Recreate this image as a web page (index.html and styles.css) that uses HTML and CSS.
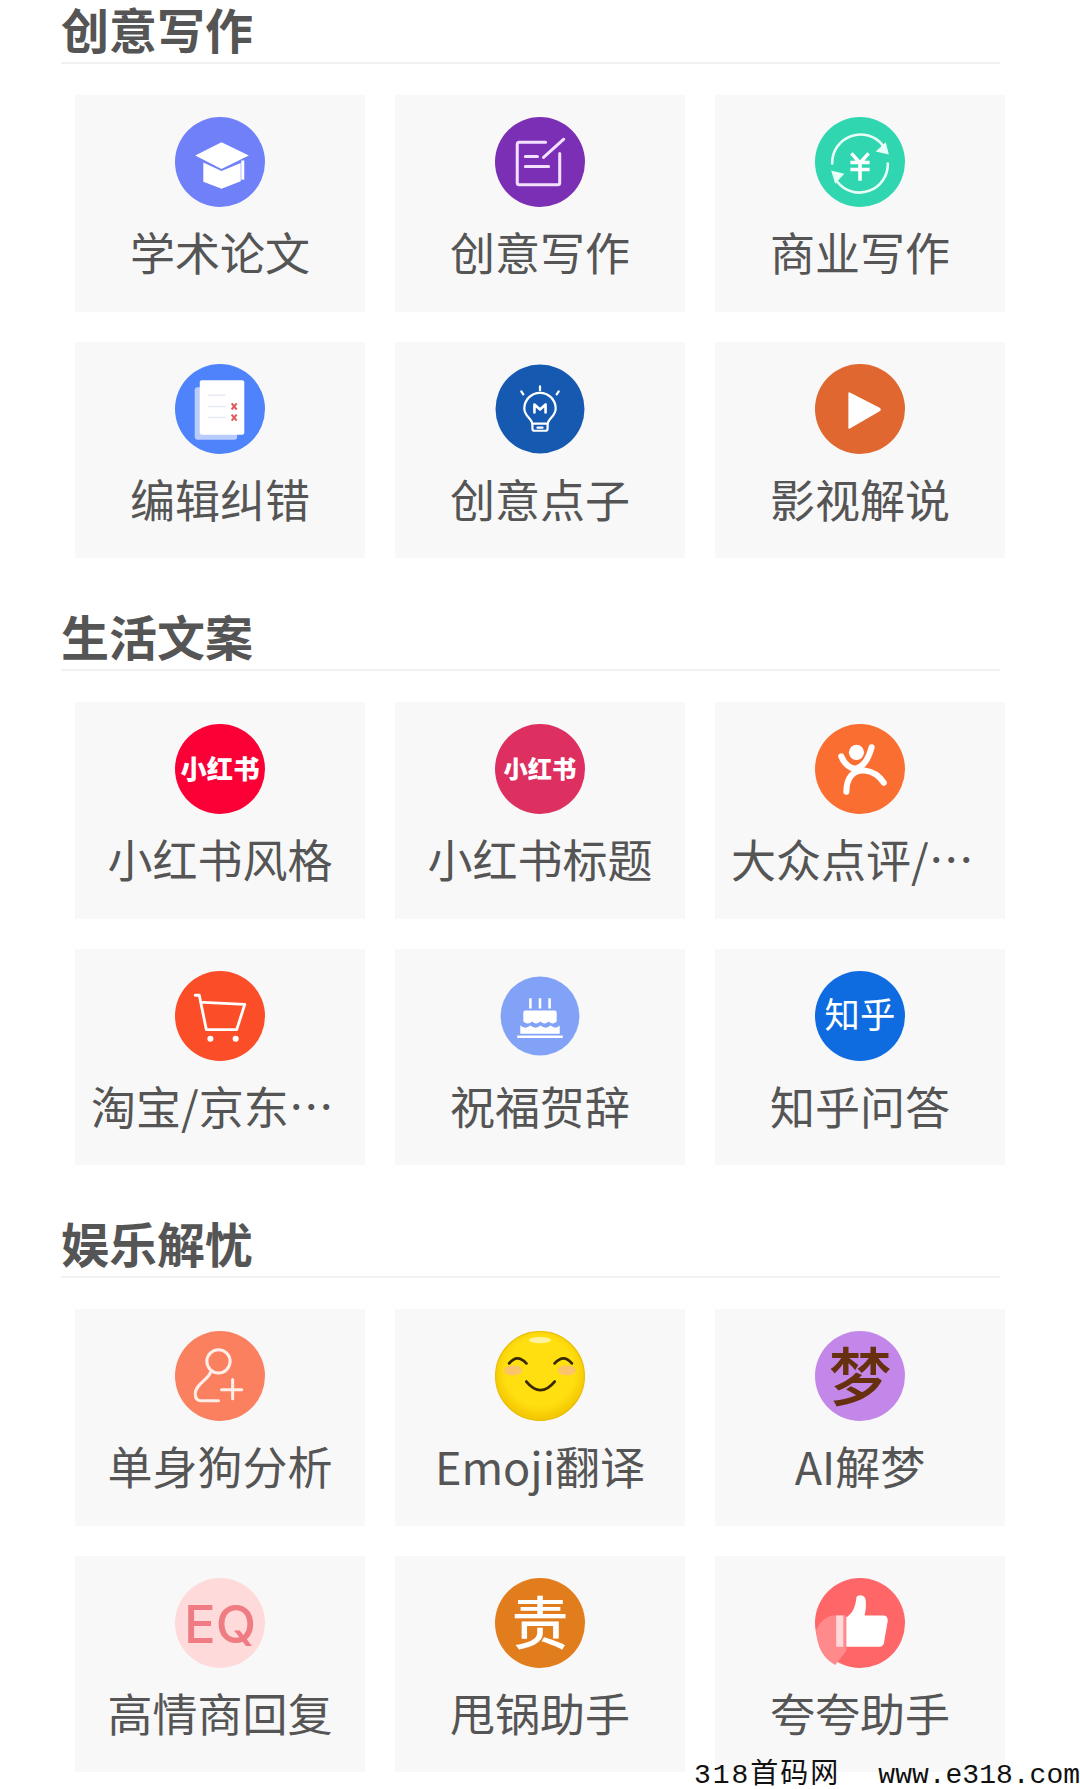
FILE: index.html
```html
<!DOCTYPE html>
<html lang="zh-CN">
<head>
<meta charset="utf-8">
<title>AI 写作工具</title>
<link rel="stylesheet" href="styles.css">
</head>
<body>
<main class="page">
  <section class="group">
    <h2 class="group-title">创意写作</h2>
    <div class="tools">
      <a class="tool">
        <svg class="icon" viewBox="0 0 89 89"><circle cx="44.5" cy="44.5" r="44.5" fill="#6f80f9"/><path d="M28 45l18 8.500 19-8v18l-19 7.500-18-7z" fill="#fff"/><path d="M20 38l26-13 27 13-27 13.500z" fill="#fff"/><path d="M67 43v19" stroke="#fff" stroke-width="3"/></svg>
        <span class="tool-name">学术论文</span>
      </a>
      <a class="tool">
        <svg class="icon" viewBox="0 0 89 89"><circle cx="44.5" cy="44.5" r="44.5" fill="#7b2fb5"/><g fill="none" stroke="#f3e0ff" stroke-width="3" stroke-linecap="round" stroke-linejoin="round"><path d="M50 25H24a2 2 0 0 0-2 2v38a2 2 0 0 0 2 2h38a2 2 0 0 0 2-2V36"/><path d="M30 39h12M30 49h23M48 40l20-18"/></g></svg>
        <span class="tool-name">创意写作</span>
      </a>
      <a class="tool">
        <svg class="icon" viewBox="0 0 89 89"><circle cx="44.5" cy="44.5" r="44.5" fill="#2fd6b0"/><g fill="none" stroke="#e8fff8" stroke-width="2.600" stroke-linecap="round"><path d="M17 46a28 28 0 0 1 50-18"/><path d="M72 46a28 28 0 0 1-50 18"/></g><path d="M73 37l-13-3 10-9zM16 53l13 3-9 10z" fill="#e8fff8"/><path d="M36 36l8.500 9.500 8.500-9.500M35 45h19M35 52h19M44.500 45v18" fill="none" stroke="#fff" stroke-width="3.500"/></svg>
        <span class="tool-name">商业写作</span>
      </a>
      <a class="tool">
        <svg class="icon" viewBox="0 0 89 89"><circle cx="44.5" cy="44.5" r="44.5" fill="#4f83fb"/><rect x="19.500" y="23" width="42" height="52" rx="3" fill="#b9cdfd"/><rect x="24.500" y="16" width="44" height="54" rx="2" fill="#fff"/><path d="M33 31h17M33 42h17M33 53h17" stroke="#e6e9f2" stroke-width="1.500"/><path d="M56 39l5 6m0-6l-5 6M56 50l5 6m0-6l-5 6" stroke="#dc5a60" stroke-width="2"/></svg>
        <span class="tool-name">编辑纠错</span>
      </a>
      <a class="tool">
        <svg class="icon" viewBox="0 0 89 89"><circle cx="44.5" cy="44.5" r="44" fill="#1559b0"/><g fill="none" stroke="#fff" stroke-width="2.200" stroke-linecap="round" stroke-linejoin="round"><path d="M37 60c0-6-8-8-8-16a15.500 15.500 0 0 1 31 0c0 8-8 10-8 16v4a2 2 0 0 1-2 2H39a2 2 0 0 1-2-2z"/><path d="M37 59h15M42 63h5"/><path d="M44.500 22v4M26 27l2 3M63 27l-2 3"/><path d="M39 48v-8l5.500 5 5.500-5v8" stroke-width="2.600"/></g></svg>
        <span class="tool-name">创意点子</span>
      </a>
      <a class="tool">
        <svg class="icon" viewBox="0 0 89 89"><circle cx="44.5" cy="44.5" r="44.5" fill="#e0672f"/><path d="M34 29l29 15a1 1 0 0 1 0 2L34 63z" fill="#fff" stroke="#fff" stroke-width="2" stroke-linejoin="round"/></svg>
        <span class="tool-name">影视解说</span>
      </a>
    </div>
  </section>

  <section class="group">
    <h2 class="group-title">生活文案</h2>
    <div class="tools">
      <a class="tool">
        <svg class="icon" viewBox="0 0 89 89"><circle cx="44.5" cy="44.5" r="44.5" fill="#fb0036"/><text class="glyph glyph-xhs" x="44.500" y="54" text-anchor="middle">小红书</text></svg>
        <span class="tool-name">小红书风格</span>
      </a>
      <a class="tool">
        <svg class="icon" viewBox="0 0 89 89"><circle cx="44.5" cy="44.5" r="44.5" fill="#dd3060"/><text class="glyph glyph-xhs-small" x="44.500" y="53" text-anchor="middle">小红书</text></svg>
        <span class="tool-name">小红书标题</span>
      </a>
      <a class="tool">
        <svg class="icon" viewBox="0 0 89 89"><circle cx="44.5" cy="44.5" r="44.5" fill="#fb6e32"/><circle cx="41" cy="28" r="7.500" fill="#fff"/><g fill="none" stroke="#fff" stroke-width="6" stroke-linecap="round"><path d="M26 32c3 8 10 13 15 12 7-2 12-10 15-21"/><path d="M31 67c0-14 7-22 18-21 9 1 15 6 19 12"/></g></svg>
        <span class="tool-name">大众点评/美团文案</span>
      </a>
      <a class="tool">
        <svg class="icon" viewBox="0 0 89 89"><circle cx="44.5" cy="44.5" r="44.5" fill="#fb4d27"/><g fill="none" stroke="#fff" stroke-width="2.800" stroke-linejoin="round" stroke-linecap="round"><path d="M20 24h4l7 34h30l8-25-41-2"/></g><circle cx="35" cy="67" r="3" fill="#fff"/><circle cx="60" cy="67" r="3" fill="#fff"/></svg>
        <span class="tool-name">淘宝/京东文案</span>
      </a>
      <a class="tool">
        <svg class="icon" viewBox="0 0 89 89"><circle cx="44.5" cy="44.5" r="39" fill="#82a2f8"/><path d="M28 50v-9q0-2 2-2h29q2 0 2 2v9q-4 4-8 0-4 4-8 0-5 4-8 0-5 4-9 0z" fill="#fff"/><path d="M25 54q5 4 10 0 5 4 10 0 5 4 10 0 5 4 9 0v8H25z" fill="#fff"/><path d="M22 65h45" stroke="#fff" stroke-width="2.500"/><path d="M35 27v10M44.500 27v10M54 27v10" stroke="#fff" stroke-width="2.500"/></svg>
        <span class="tool-name">祝福贺辞</span>
      </a>
      <a class="tool">
        <svg class="icon" viewBox="0 0 89 89"><circle cx="44.5" cy="44.5" r="44.5" fill="#0f6ce0"/><text class="glyph glyph-zhihu" x="44.500" y="56" text-anchor="middle">知乎</text></svg>
        <span class="tool-name">知乎问答</span>
      </a>
    </div>
  </section>

  <section class="group">
    <h2 class="group-title">娱乐解忧</h2>
    <div class="tools">
      <a class="tool">
        <svg class="icon" viewBox="0 0 89 89"><circle cx="44.5" cy="44.5" r="44.5" fill="#fb8060"/><g fill="none" stroke="#ffeee8" stroke-width="3" stroke-linecap="round"><ellipse cx="43" cy="30" rx="11.500" ry="11.500"/><path d="M35 41c-2 7-15 12-15 21 0 5 2 7 6 7h17"/><path d="M46 58h20M57 48v19"/></g></svg>
        <span class="tool-name">单身狗分析</span>
      </a>
      <a class="tool">
        <svg class="icon" viewBox="0 0 89 89"><defs><radialGradient id="smile" cx="50%" cy="45%" r="55%"><stop offset="70%" stop-color="#ffdf10"/><stop offset="100%" stop-color="#f2c400"/></radialGradient></defs><circle cx="44.5" cy="44.5" r="44" fill="url(#smile)" stroke="#e6bc00"/><ellipse cx="44.500" cy="9" rx="11" ry="3" fill="#fff3a0"/><ellipse cx="18" cy="39" rx="9" ry="5" fill="#fbc468"/><ellipse cx="71" cy="39" rx="9" ry="5" fill="#fbc468"/><g fill="none" stroke="#3a2a00" stroke-width="2.800" stroke-linecap="round"><path d="M14 32q8-10 17 0M59 32q9-10 17 0"/><path d="M31 50q14 17 28 0"/></g></svg>
        <span class="tool-name">Emoji翻译</span>
      </a>
      <a class="tool">
        <svg class="icon" viewBox="0 0 89 89"><circle cx="44.5" cy="44.5" r="44.5" fill="#c387ea"/><text class="glyph glyph-dream" x="44.500" y="68" text-anchor="middle">梦</text></svg>
        <span class="tool-name">AI解梦</span>
      </a>
      <a class="tool">
        <svg class="icon" viewBox="0 0 89 89"><circle cx="44.5" cy="44.5" r="44.5" fill="#fedada"/><text class="glyph glyph-eq" x="44.500" y="64" text-anchor="middle">EQ</text></svg>
        <span class="tool-name">高情商回复</span>
      </a>
      <a class="tool">
        <svg class="icon" viewBox="0 0 89 89"><circle cx="44.5" cy="44.5" r="44.5" fill="#e27d1e"/><text class="glyph glyph-blame" x="44.500" y="65" text-anchor="middle">责</text></svg>
        <span class="tool-name">甩锅助手</span>
      </a>
      <a class="tool">
        <svg class="icon" viewBox="0 0 89 89"><circle cx="44.5" cy="44.5" r="44.5" fill="#fe6668"/><path d="M1 52c2-6 8-13 16-15h14v35L20 86C8 80 2 68 1 52z" fill="#ff8a8c"/><path d="M21 37h7v31h-7z" fill="#ffd9d9"/><path d="M31 68V39c6-4 9-10 10-20 1-3 8-3 9 2 1 6 0 12-1 16h19c3 0 4 3 4 5l-4 23c-1 2-2 3-4 3z" fill="#fff"/></svg>
        <span class="tool-name">夸夸助手</span>
      </a>
    </div>
  </section>
</main>
<div class="watermark"><span class="watermark-name">318首码网</span><span>www.e318.com</span></div>
</body>
</html>
```

FILE: styles.css
```css
html, body {
  margin: 0;
  padding: 0;
  background: #fff;
}

body {
  position: relative;
  width: 1080px;
  height: 1789px;
  overflow: hidden;
  font-family: "Noto Sans CJK SC", "Noto Sans", sans-serif;
  color: #555;
}

.page {
  padding-left: 61px;
  width: 939px;
}

.group {
  margin-bottom: 49px;
}

.group-title {
  box-sizing: border-box;
  margin: 0;
  height: 64px;
  border-bottom: 2px solid #f1f1f1;
  font-size: 48px;
  font-weight: 700;
  line-height: 57px;
  color: #555;
}

.tools {
  display: grid;
  grid-template-columns: repeat(3, 290px);
  grid-auto-rows: 216.5px;
  gap: 30px;
  margin: 31px 0 0 14px;
}

.tool {
  display: flex;
  flex-direction: column;
  align-items: center;
  box-sizing: border-box;
  padding: 22px 16px 0;
  background: #f8f8f8;
  min-width: 0;
}

.icon {
  display: block;
  flex: none;
  width: 90px;
  height: 90px;
}

.tool-name {
  display: block;
  margin-top: 12px;
  max-width: 100%;
  overflow: hidden;
  font-size: 45px;
  line-height: 65px;
  white-space: nowrap;
  text-overflow: ellipsis;
  color: #555;
}

.glyph {
  fill: #fff;
  font-family: "Noto Sans CJK SC", sans-serif;
}

.glyph-xhs {
  font-size: 26px;
  font-weight: 900;
}

.glyph-xhs-small {
  font-size: 24px;
  font-weight: 900;
}

.glyph-zhihu {
  font-size: 35px;
}

.glyph-dream {
  fill: #66300f;
  font-size: 62px;
  font-weight: 500;
}

.glyph-eq {
  fill: #ee7c82;
  font-family: Inter, "Liberation Sans", sans-serif;
  font-size: 52px;
  font-weight: 500;
}

.glyph-blame {
  font-size: 56px;
  font-weight: 500;
}

.watermark {
  position: absolute;
  right: 0;
  bottom: -5px;
  display: flex;
  gap: 38px;
  font-family: "Liberation Mono", "Noto Sans CJK SC", monospace;
  font-size: 28px;
  line-height: 36px;
  color: #111;
  white-space: nowrap;
}

.watermark-name {
  letter-spacing: 2px;
}
```
